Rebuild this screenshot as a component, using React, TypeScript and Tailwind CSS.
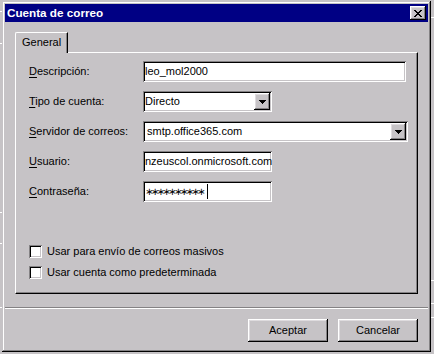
const raised = "shadow-[inset_-1px_-1px_0_#000,inset_1px_1px_0_#fff,inset_-2px_-2px_0_#848284,inset_2px_2px_0_#dedbde]";
const sunken = "shadow-[inset_1px_1px_0_#848284,inset_-1px_-1px_0_#fff,inset_2px_2px_0_#000,inset_-2px_-2px_0_#c6c3c6]";

const CloseGlyph = () => (
  <svg width="8" height="7" viewBox="0 0 8 7" shapeRendering="crispEdges">
    <path
      fill="#000"
      d="M0 0h2v1H0zM6 0h2v1H6zM1 1h2v1H1zM5 1h2v1H5zM2 2h4v1H2zM3 3h2v1H3zM2 4h4v1H2zM1 5h2v1H1zM5 5h2v1H5zM0 6h2v1H0zM6 6h2v1H6z"
    />
  </svg>
);

const ArrowDown = () => (
  <svg width="7" height="4" viewBox="0 0 7 4" shapeRendering="crispEdges">
    <path fill="#000" d="M0 0h7v1H0zM1 1h5v1H1zM2 2h3v1H2zM3 3h1v1H3z" />
  </svg>
);

const Label = ({ k, rest }: { k: string; rest: string }) => (
  <div className="w-[114px] shrink-0 text-black">
    <span className="underline underline-offset-[2px]">{k}</span>
    {rest}
  </div>
);

const TextField = ({ value, width }: { value: string; width: string }) => (
  <div className={`${width} ${sunken} flex h-[21px] items-center overflow-hidden whitespace-nowrap bg-white pl-[2px] pr-[2px]`}>
    <span>{value}</span>
  </div>
);

const PasswordField = ({ length, width }: { length: number; width: string }) => (
  <div className={`${width} ${sunken} flex h-[21px] items-center overflow-hidden whitespace-nowrap bg-white pl-[2px] pr-[2px]`}>
    <span className="font-['DejaVu_Sans',sans-serif] text-[10px] tracking-[-2.6px]">{"∗".repeat(length)}</span>
    <span className="ml-[4px] h-[15px] w-px bg-black" />
  </div>
);

const Combo = ({ value, width, pad }: { value: string; width: string; pad: string }) => (
  <div className={`${width} ${sunken} flex h-[21px] items-center bg-white p-[2px]`}>
    <span className={`flex-1 whitespace-nowrap ${pad}`}>{value}</span>
    <div className={`${raised} flex h-[17px] w-[16px] items-center justify-center bg-[#c6c3c6]`}>
      <ArrowDown />
    </div>
  </div>
);

const Check = ({ label }: { label: string }) => (
  <div className="flex h-[13px] items-center gap-[5px]">
    <div className={`${sunken} size-[13px] bg-white`} />
    <span className="whitespace-nowrap">{label}</span>
  </div>
);

const Button = ({ label }: { label: string }) => (
  <button className={`${raised} flex h-[23px] w-[80px] items-center justify-center bg-[#c6c3c6] text-black`}>
    {label}
  </button>
);

export default function App() {
  return (
    <div className="relative h-[354px] w-[434px] overflow-hidden bg-[#c6c3c6] font-['Liberation_Sans',Arial,sans-serif] text-[11px] leading-none text-black">
      {/* windows behind the dialog */}
      <div className="absolute left-0 top-[11px] h-px w-[3px] bg-white" />
      <div className="absolute left-0 top-[43px] h-px w-[3px] bg-white" />
      <div className="absolute left-0 top-[212px] h-px w-[3px] bg-white" />
      <div className="absolute left-0 top-[243px] h-px w-[3px] bg-white" />
      <div className="absolute left-0 top-[307px] h-px w-[3px] bg-white" />
      <div className="absolute right-0 top-[17px] h-px w-[3px] bg-white" />
      <div className="absolute right-0 top-[280px] h-px w-[3px] bg-white" />
      <div className="absolute right-0 top-[303px] h-px w-[3px] bg-white" />
      <div className="absolute right-0 top-[317px] h-px w-[3px] bg-white" />

      <div className="absolute left-[2px] top-[1px] flex h-[351px] w-[429px] flex-col bg-[#c6c3c6] p-[3px] shadow-[inset_-1px_-1px_0_#000,inset_1px_1px_0_#c6c3c6,inset_-2px_-2px_0_#848284,inset_2px_2px_0_#fff]">
        <div className="flex h-[18px] items-center justify-between bg-[#000084] pl-[2px] pr-[2px]">
          <span className="text-[11.7px] font-bold text-white">Cuenta de correo</span>
          <div className={`${raised} flex h-[14px] w-[16px] items-center justify-center bg-[#c6c3c6]`}>
            <CloseGlyph />
          </div>
        </div>

        <div className="mt-[10px] px-[10px]">
          <div className="relative z-10 mb-[-1px] flex h-[21px] w-[53px] items-start rounded-tl-[2px] border-l border-t border-r border-l-white border-t-white border-r-black bg-[#c6c3c6] pl-[6px] pt-[4px] shadow-[inset_-1px_0_0_#848284]">
            General
          </div>
          <div className="flex h-[242px] flex-col border border-b-black border-l-white border-r-black border-t-white pl-[13px] pt-[8px] shadow-[inset_-1px_-1px_0_#848284]">
            <div className="flex flex-col gap-[9px]">
              <div className="flex items-center">
                <Label k="D" rest="escripción:" />
                <TextField value="leo_mol2000" width="w-[263px]" />
              </div>
              <div className="flex items-center">
                <Label k="T" rest="ipo de cuenta:" />
                <Combo value="Directo" width="w-[129px]" pad="pl-0" />
              </div>
              <div className="flex items-center">
                <Label k="S" rest="ervidor de correos:" />
                <Combo value="smtp.office365.com" width="w-[265px]" pad="pl-[2px]" />
              </div>
              <div className="flex items-center">
                <Label k="U" rest="suario:" />
                <TextField value="nzeuscol.onmicrosoft.com" width="w-[129px]" />
              </div>
              <div className="flex items-center">
                <Label k="C" rest="ontraseña:" />
                <PasswordField length={10} width="w-[129px]" />
              </div>
            </div>
            <div className="mt-[43px] flex flex-col gap-[8px]">
              <Check label="Usar para envío de correos masivos" />
              <Check label="Usar cuenta como predeterminada" />
            </div>
          </div>
        </div>

        <div className="mt-[13px] h-[2px] border-t border-b border-t-[#848284] border-b-white" />

        <div className="mt-[10px] flex justify-end gap-[10px] pr-[10px]">
          <Button label="Aceptar" />
          <Button label="Cancelar" />
        </div>
      </div>
    </div>
  );
}
